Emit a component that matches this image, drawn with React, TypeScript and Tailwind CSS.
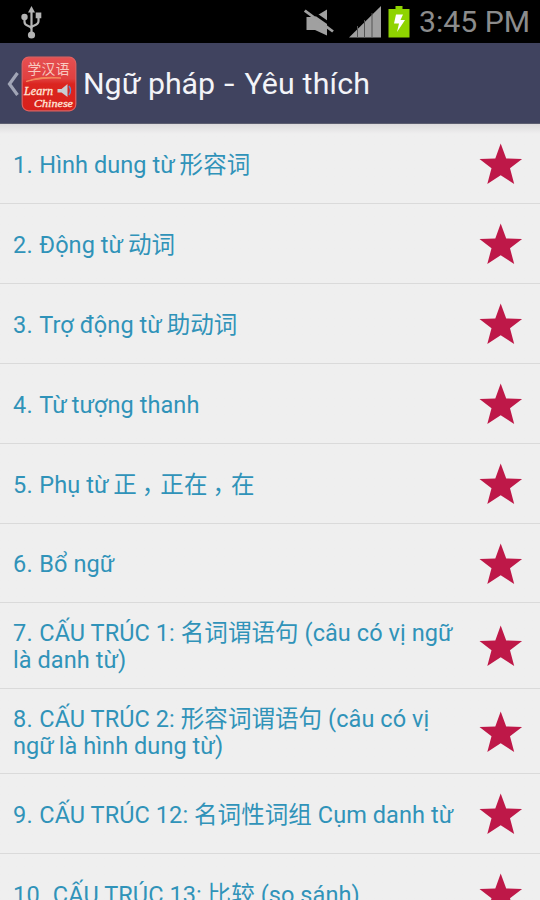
type Row = { no: string; lines: string[]; height: string };

const rows: Row[] = [
  { no: "1.", lines: ["Hình dung từ 形容词"], height: "h-[80px]" },
  { no: "2.", lines: ["Động từ 动词"], height: "h-[80px]" },
  { no: "3.", lines: ["Trợ động từ 助动词"], height: "h-[80px]" },
  { no: "4.", lines: ["Từ tượng thanh"], height: "h-[80px]" },
  { no: "5.", lines: ["Phụ từ 正，正在，在"], height: "h-[80px]" },
  { no: "6.", lines: ["Bổ ngữ"], height: "h-[79px]" },
  { no: "7.", lines: ["CẤU TRÚC 1: 名词谓语句 (câu có vị ngữ", "là danh từ)"], height: "h-[86px]" },
  { no: "8.", lines: ["CẤU TRÚC 2: 形容词谓语句 (câu có vị", "ngữ là hình dung từ)"], height: "h-[85px]" },
  { no: "9.", lines: ["CẤU TRÚC 12: 名词性词组 Cụm danh từ"], height: "h-[80px]" },
  { no: "10.", lines: ["CẤU TRÚC 13: 比较 (so sánh)"], height: "h-[80px]" },
];

function Star() {
  return (
    <svg className="h-[42px] w-[44px] shrink-0" viewBox="0 0 44 42" fill="#be1848">
      <path d="M21.700 .5 27.200 15.400 43.100 16 31 25.300 35.200 41 21.700 32.300 8.300 41 12.500 25.300.5 16 16.300 15.400Z" />
    </svg>
  );
}

// Full-width commas sit near the middle of their cell; the space after a
// horned vowel is narrower than the others.
function Line({ text }: { text: string }) {
  return (
    <>
      {text.split(/(，|(?<=[ừữ]) )/).map((part, i) => {
        if (part === "，") {
          return <span key={i} className="pl-[5px] -mr-[5px]">{part}</span>;
        }
        if (part === " ") {
          return <span key={i} className="[word-spacing:-1.200px]">{part}</span>;
        }
        return <span key={i}>{part}</span>;
      })}
    </>
  );
}

function StatusBar() {
  return (
    <div className="flex h-[43px] shrink-0 items-center bg-black pl-[20px] pr-[11px]">
      <svg className="h-[34px] w-[23px]" viewBox="0 0 23 34" fill="#b4b4b4" stroke="#b4b4b4">
        <path d="M11.500 1 15 7.500H8Z" stroke="none" />
        <path d="M11.500 5V29M4.500 12v5c0 5 7 3 7 7M18.500 11v5c0 5-7 4-7 7" fill="none" strokeWidth="2.200" />
        <circle cx="11.500" cy="30" r="3.600" stroke="none" />
        <circle cx="4.500" cy="12" r="3.200" stroke="none" />
        <path d="M15.700 7.500h5.600v5.800h-5.600z" stroke="none" />
      </svg>
      <div className="ml-auto flex items-center">
        <svg className="h-[30px] w-[32px]" viewBox="0 0 32 30">
          <path d="M2.500 10h8L23 2.500v26L11 23H2.500Z" fill="#a0a0a0" />
          <path d="M2 .5 30 20" stroke="#000" strokeWidth="3" />
          <path d="M.8 3.500 29 24.500" stroke="#a0a0a0" strokeWidth="2.800" />
        </svg>
        <svg className="ml-[13px] h-[32px] w-[33px]" viewBox="0 0 33 32">
          <path d="M0 31.500 32 0V31.500Z" fill="#a0a0a0" />
          <path d="M8.500 20V32M15.500 14V32M23 7V32" stroke="#555" strokeWidth="1" />
        </svg>
        <svg className="ml-[6px] h-[32px] w-[22px]" viewBox="0 0 22 32">
          <path d="M7.500 0h7v3H21.500V31.500H.5V3h7Z" fill="#8fd400" />
          <path d="M8 8.500h7l-2.500 5.500H17L9 26l2-8.500H6Z" fill="#fff" />
        </svg>
        <span className="ml-[9px] w-[110px] whitespace-nowrap pt-px text-[30.200px] leading-[42px] text-[#8c8c8c]">3:45 PM</span>
      </div>
    </div>
  );
}

function AppIcon() {
  return (
    <svg className="ml-[2px] h-[56px] w-[56px]" viewBox="0 0 56 56">
      <defs>
        <linearGradient id="tile" x1="0" y1="0" x2="0" y2="1">
          <stop offset="0" stopColor="#e65052" />
          <stop offset=".4" stopColor="#e14040" />
          <stop offset=".5" stopColor="#db2520" />
          <stop offset="1" stopColor="#d9201b" />
        </linearGradient>
      </defs>
      <rect x="1.200" y="1.200" width="53.600" height="53.600" rx="6.500" fill="url(#tile)" stroke="#e0605f" strokeWidth="1.200" />
      <path d="M5 25.500Q20 19.500 40 22Q20 21.500 5 25.500Z" fill="#f5a070" stroke="#f38a5c" strokeWidth="1" />
      <text x="6.500" y="17.500" fontSize="13.800" fill="#f8c9c0" fontFamily="Noto Sans CJK SC, sans-serif" textLength="42">学汉语</text>
      <text x="3" y="39" fontSize="11.500" fontStyle="italic" fill="#ffe5d8" stroke="#ffe5d8" strokeWidth=".3" fontFamily="Liberation Serif, serif" textLength="29" lengthAdjust="spacingAndGlyphs">Learn</text>
      <text x="13" y="51" fontSize="11" fontStyle="italic" fill="#ffe5d8" stroke="#ffe5d8" strokeWidth=".3" fontFamily="Liberation Serif, serif" textLength="39" lengthAdjust="spacingAndGlyphs">Chinese</text>
      <path d="M36.500 33h4l6-5v13l-6-4.500h-4Z" fill="#c9cdd2" />
      <path d="M48 30q3 4.500 0 9" fill="none" stroke="#5b8ed0" strokeWidth="1.500" />
    </svg>
  );
}

export default function App() {
  return (
    <div className="flex h-[900px] w-[540px] flex-col overflow-hidden bg-[#efefef] font-['Roboto','Noto_Sans_CJK_SC',sans-serif]">
      <StatusBar />
      <header className="flex h-[81px] shrink-0 items-center border-b border-[#5c5e70] bg-[#40435f] pl-[7px] pt-px">
        <svg className="h-[24px] w-[12px]" viewBox="0 0 12 24" fill="none" stroke="#a1a5b6" strokeWidth="3.200">
          <path d="M10.500 1 2.500 12l8 11" />
        </svg>
        <AppIcon />
        <h1 className="ml-[6px] whitespace-nowrap pt-px text-[30.300px] leading-[40px] text-[#f3f4f8]">
          Ngữ pháp <span className="ml-[2px] mr-[4px] inline-block scale-x-125">-</span> <span className="tracking-[0.150px]">Yêu thích</span>
        </h1>
      </header>
      <ul className="shrink-0 bg-linear-to-b from-[#dddbdd] to-[#efefef] to-[10px]">
        {rows.map((row) => (
          <li key={row.no} className={`flex items-center border-b border-[#dadada] pl-[13px] pr-[17px] pt-px ${row.height}`}>
            <div className="flex-1 whitespace-nowrap pt-[2px] text-[23.500px] leading-[27px] tracking-[0.070px] text-[#3093b9]">
              {row.lines.map((line, i) => (
                <p key={line}>
                  {i === 0 && <span className="tracking-[0.350px]">{row.no} </span>}
                  <Line text={line} />
                </p>
              ))}
            </div>
            <Star />
          </li>
        ))}
      </ul>
    </div>
  );
}
